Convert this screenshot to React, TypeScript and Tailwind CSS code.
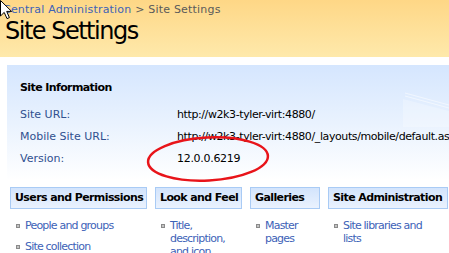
import React from 'react'

const verdana = "font-['DejaVu_Sans',Verdana,sans-serif]"

function Bullet() {
  return <span className="mt-[5px] h-[4px] w-[4px] shrink-0 border border-[#8a8a8a] bg-[#c4c4c4]" />
}

function Section({
  title,
  width,
  links,
  textWidth,
}: {
  title: string
  width: string
  links: string[]
  textWidth?: string
}) {
  return (
    <div className={`${width} shrink-0`}>
      <div className="h-[22px] border border-[#a9cbf5] bg-gradient-to-b from-[#d3e4fc] to-[#eaf2fe] pl-[4px] text-[11px] font-bold leading-[20px] tracking-[-0.6px] text-black whitespace-nowrap">
        {title}
      </div>
      <ul className="mt-[10px] flex flex-col gap-[8px]">
        {links.map((l) => (
          <li key={l} className="flex gap-[5px] pl-[6px]">
            <Bullet />
            <span
              className={`${textWidth ?? ''} text-[11px] leading-[13px] tracking-[-0.8px] text-[#3d62b7]`}
            >
              {l}
            </span>
          </li>
        ))}
      </ul>
    </div>
  )
}

export default function App() {
  return (
    <div className={`relative h-[253px] w-[449px] overflow-hidden bg-white ${verdana}`}>
      {/* page title band */}
      <div className="h-[57px] bg-gradient-to-b from-[#fed786] to-[#fee9ab] pl-[3px] pt-[3px]">
        <div className="text-[11px] leading-[14px] tracking-[0.2px] whitespace-nowrap">
          <span className="text-[#3d62b7]">Central Administration</span>
          <span className="text-[#5a5a5a]"> &gt; Site Settings</span>
        </div>
        <div className="mt-[2px] pl-[2px] text-[24px] leading-[24px] tracking-[-1.5px] text-black">
          Site Settings
        </div>
      </div>

      {/* site information panel */}
      <div className="relative ml-[7px] mt-[8px] h-[115px] bg-gradient-to-b from-[#d5e6fe] via-[#e9f2fe] to-white pl-[13px] pt-[12px]">
        <svg
          className="absolute right-0 top-[22px]"
          width="46"
          height="40"
          viewBox="0 0 46 40"
        >
          <path d="M2 6 L46 18 M2 9 L46 21" stroke="#ffffff" strokeOpacity="0.5" strokeWidth="1.2" />
          <path d="M0 12 L46 24 L46 40 L0 40 Z" fill="#ffffff" fillOpacity="0.25" />
        </svg>
        <div className="text-[11px] font-bold leading-[22px] tracking-[-0.6px] text-black">
          Site Information
        </div>
        <div className="mt-[5px] grid grid-cols-[157px_1fr] text-[11px] leading-[22px] whitespace-nowrap">
          <span className="text-[#30508f]">Site URL:</span>
          <span className="tracking-[-0.4px] text-black">http://w2k3-tyler-virt:4880/</span>
          <span className="text-[#30508f]">Mobile Site URL:</span>
          <span className="tracking-[-0.4px] text-black">http://w2k3-tyler-virt:4880/_layouts/mobile/default.aspx</span>
          <span className="text-[#30508f]">Version:</span>
          <span className="tracking-[-0.3px] text-black">12.0.0.6219</span>
        </div>
      </div>

      {/* link sections */}
      <div className="ml-[10px] mt-[7px] flex gap-[8px]">
        <Section title="Users and Permissions" width="w-[137px]" links={['People and groups', 'Site collection']} />
        <Section title="Look and Feel" width="w-[87px]" links={['Title, description, and icon']} textWidth="w-[66px]" />
        <Section title="Galleries" width="w-[70px]" links={['Master pages']} textWidth="w-[50px]" />
        <Section title="Site Administration" width="w-[120px]" links={['Site libraries and lists']} textWidth="w-[88px]" />
      </div>

      {/* red annotation ellipse */}
      <svg className="pointer-events-none absolute left-0 top-0" width="449" height="253">
        <ellipse
          cx="208"
          cy="159"
          rx="60"
          ry="21.5"
          transform="rotate(-3 208 159)"
          fill="none"
          stroke="#e8141a"
          strokeWidth="2.5"
        />
      </svg>

      {/* mouse pointer */}
      <svg className="absolute left-0 top-0" width="14" height="22" viewBox="0 0 14 22">
        <path
          d="M0.5 0.5 L0.5 16 L4.2 12.4 L7 18.6 L9.4 17.6 L6.7 11.4 L11.6 11.4 Z"
          fill="#ffffff"
          stroke="#000000"
          strokeWidth="1"
          strokeLinejoin="miter"
        />
      </svg>
    </div>
  )
}
